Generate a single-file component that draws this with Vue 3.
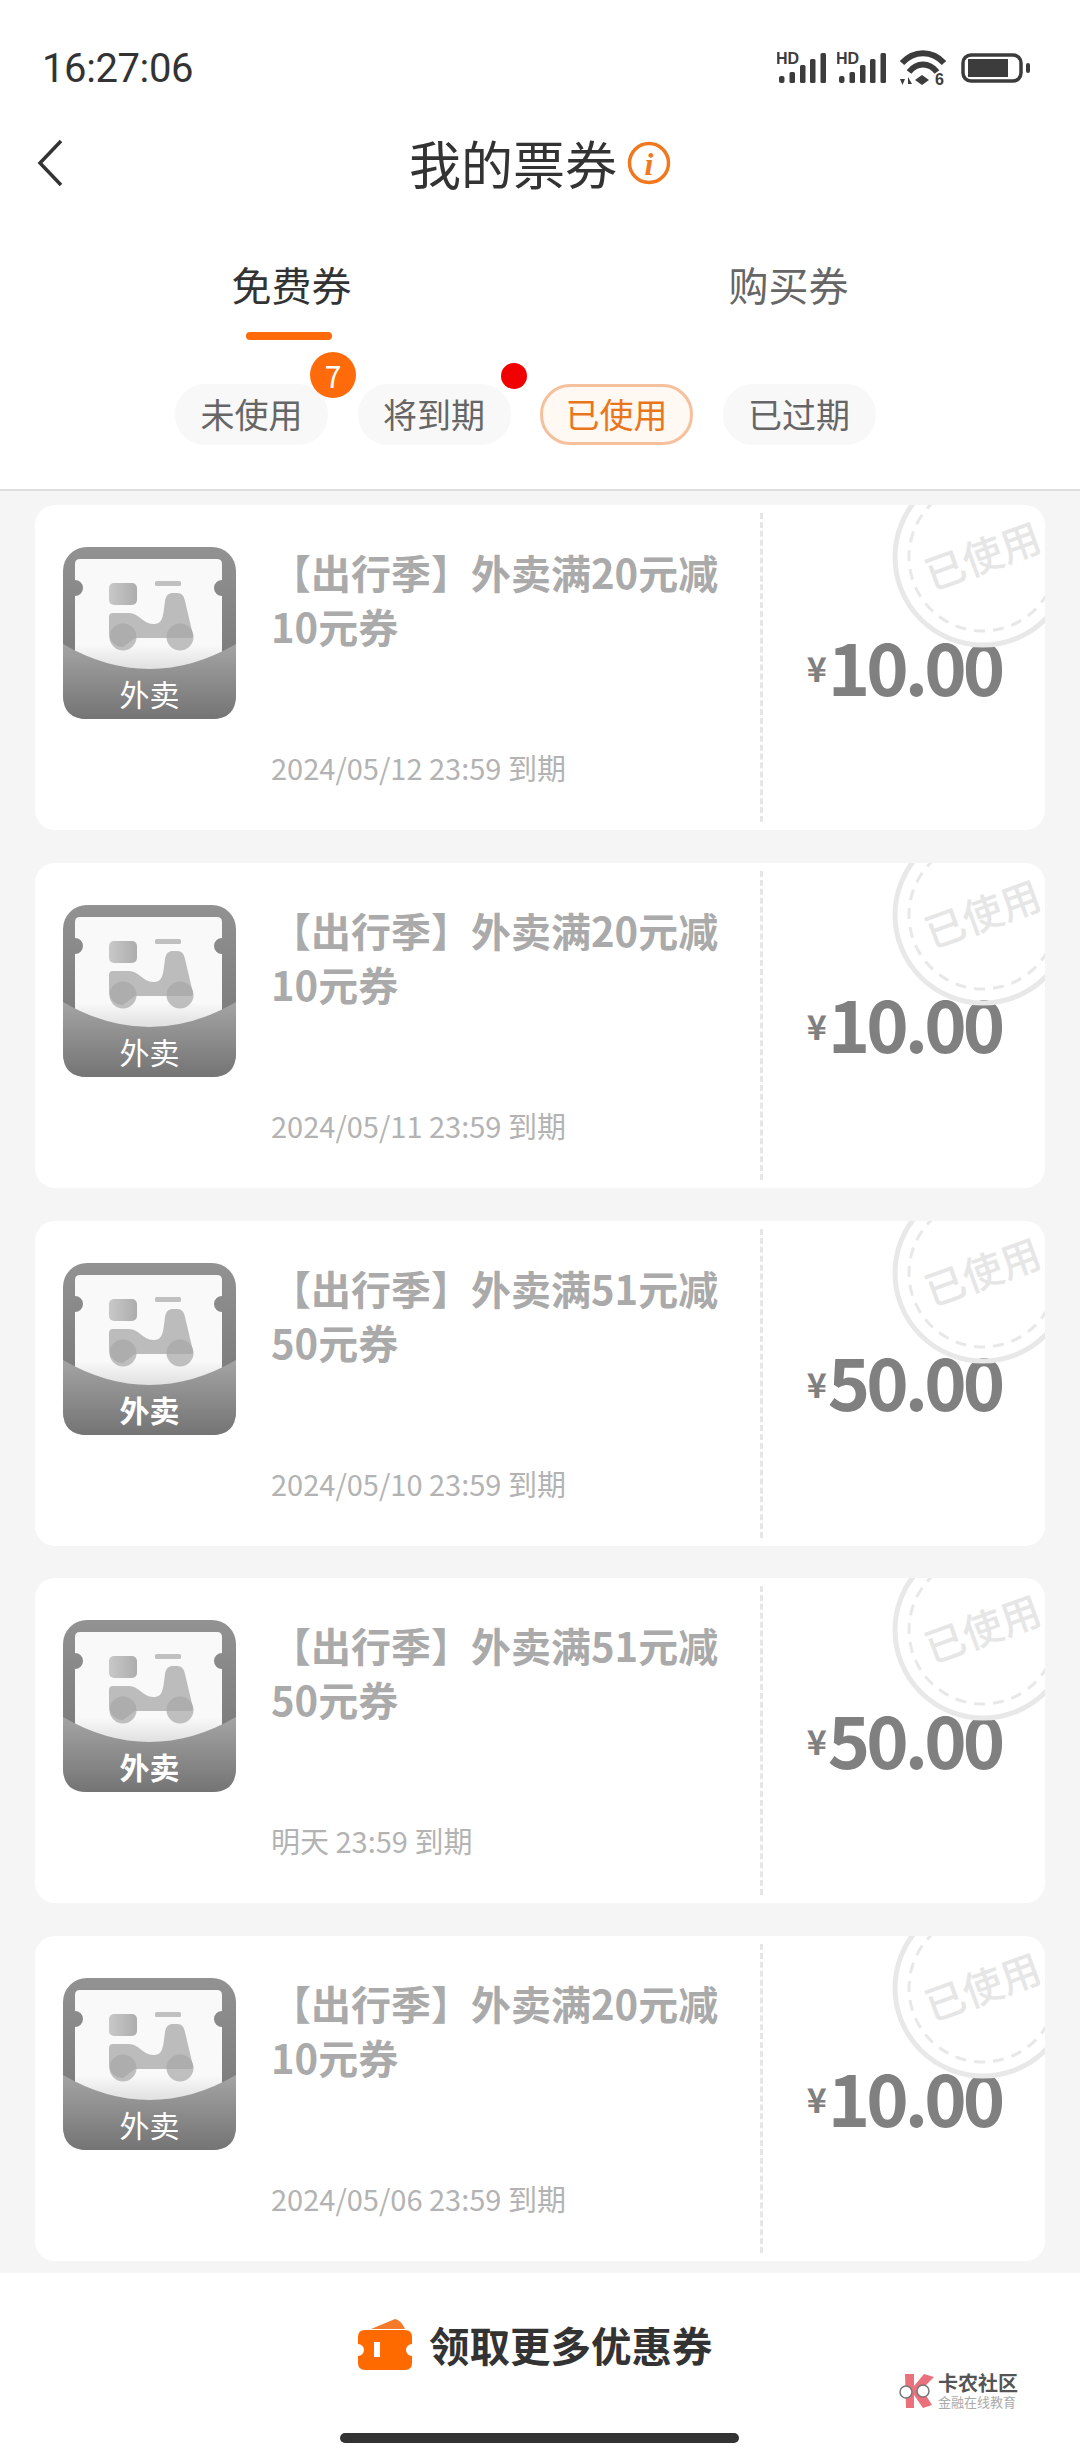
<script setup>
import { ref } from 'vue';

// 筛选项
const chips = [
  { label: '未使用', badge: '7' },
  { label: '将到期', dot: true },
  { label: '已使用', active: true },
  { label: '已过期' },
];

// 已使用的券
const coupons = ref([
  { id: 1, title: '【出行季】外卖满20元减10元券', date: '2024/05/12 23:59 到期', price: '10.00', strong: false },
  { id: 2, title: '【出行季】外卖满20元减10元券', date: '2024/05/11 23:59 到期', price: '10.00', strong: false },
  { id: 3, title: '【出行季】外卖满51元减50元券', date: '2024/05/10 23:59 到期', price: '50.00', strong: true },
  { id: 4, title: '【出行季】外卖满51元减50元券', date: '明天 23:59 到期', price: '50.00', strong: true },
  { id: 5, title: '【出行季】外卖满20元减10元券', date: '2024/05/06 23:59 到期', price: '10.00', strong: false },
]);
</script>

<template>
  <div class="page">
    <header class="head">
      <div class="status">
        <span class="time">16:27:06</span>
        <div class="status-icons">
          <svg v-for="n in 2" :key="n" width="50" height="32" viewBox="0 0 50 32">
            <text x="-1" y="12" class="hd">HD</text>
            <rect x="2" y="24" width="5.500" height="7" rx="2" fill="#3c3c3c" />
            <rect x="12.500" y="20" width="5.500" height="11" rx="1.500" fill="#3c3c3c" />
            <rect x="23" y="13" width="5.500" height="18" rx="1.500" fill="#3c3c3c" />
            <rect x="33" y="7" width="5.500" height="24" rx="1.500" fill="#3c3c3c" />
            <rect x="43.500" y="1" width="5.500" height="30" rx="1.500" fill="#3c3c3c" />
          </svg>
          <svg class="wifi" width="48" height="36" viewBox="0 0 48 36">
            <path d="M3 13 C15 0 33 0 45 13" fill="none" stroke="#3c3c3c" stroke-width="6" />
            <path d="M10 22 C18 12 30 12 38 22" fill="none" stroke="#3c3c3c" stroke-width="6" />
            <path d="M23 25 L30 30 L23 35 L16 30 Z" fill="#3c3c3c" />
            <path d="M1 29 L6 29 L3.500 35 Z M9 27 L13 34 L9 34 Z" fill="#3c3c3c" />
            <text x="36" y="35" class="six">6</text>
          </svg>
          <svg width="69" height="30" viewBox="0 0 69 30">
            <rect x="2" y="2" width="58" height="26" rx="8" fill="none" stroke="#3c3c3c" stroke-width="3.500" />
            <rect x="7" y="6" width="40" height="18" fill="#3c3c3c" />
            <rect x="65" y="10" width="4" height="10" rx="2" fill="#3c3c3c" />
          </svg>
        </div>
      </div>

      <div class="nav">
        <svg class="back" width="26" height="48" viewBox="0 0 26 48">
          <path d="M24 2 L3 24 L24 46" fill="none" stroke="#333" stroke-width="3.500" />
        </svg>
        <h1 class="title">我的票券</h1>
        <svg class="info" width="44" height="44" viewBox="0 0 44 44">
          <circle cx="22" cy="22" r="19.500" fill="none" stroke="#f0781e" stroke-width="3.500" />
          <text x="22" y="34" text-anchor="middle" class="info-i">i</text>
        </svg>
      </div>

      <div class="tabs">
        <div class="tab is-active">免费券<i class="tab-line"></i></div>
        <div class="tab">购买券</div>
      </div>

      <div class="chips">
        <div v-for="chip in chips" :key="chip.label" class="chip" :class="{ 'is-active': chip.active }">
          {{ chip.label }}
          <span v-if="chip.badge" class="badge">{{ chip.badge }}</span>
          <span v-if="chip.dot" class="dot"></span>
        </div>
      </div>
    </header>

    <main class="list">
      <article v-for="c in coupons" :key="c.id" class="card">
        <div class="thumb">
          <svg width="173" height="172" viewBox="0 0 173 172">
            <defs>
              <linearGradient id="shell" x1="0" y1="0" x2="0" y2="1">
                <stop offset="0" stop-color="#929292" />
                <stop offset="0.6" stop-color="#7e7e7e" />
              </linearGradient>
              <linearGradient id="pocket" x1="0" y1="0" x2="0" y2="1">
                <stop offset="0" stop-color="#a4a4a4" />
                <stop offset="1" stop-color="#747474" />
              </linearGradient>
              <linearGradient id="box" x1="0" y1="0" x2="1" y2="0">
                <stop offset="0" stop-color="#c8c8c8" />
                <stop offset="1" stop-color="#adadad" />
              </linearGradient>
              <linearGradient id="sheet" x1="0" y1="0" x2="0" y2="1">
                <stop offset="0.75" stop-color="#f9f9f9" />
                <stop offset="1" stop-color="#dcdcdc" />
              </linearGradient>
            </defs>
            <rect width="173" height="172" rx="24" fill="url(#shell)" />
            <path d="M17 12 H154 Q159 12 159 17 V33 A8 8 0 0 0 159 49 V126 H12 V49 A8 8 0 0 0 12 33 V17 Q12 12 17 12 Z" fill="url(#sheet)" />
            <rect x="46" y="36" width="28" height="22" rx="5" fill="url(#box)" />
            <rect x="92" y="34" width="26" height="5" rx="1.500" fill="#c0c0c0" />
            <path d="M50 66 H66 C76 66 80 77 90 77 C100 77 100 70 102 54 C103 48 106 46 110 46 H114 C119 46 121 49 122 54 L130 88 Q131 91 127 91 H72 L60 100 C52 100 46 94 46 86 V70 Q46 66 50 66 Z" fill="#bcbcbc" />
            <circle cx="60" cy="90" r="13.500" fill="#a6a6a6" opacity="0.7" />
            <circle cx="117" cy="90" r="13.500" fill="#a6a6a6" opacity="0.7" />
            <path d="M0 97 Q43 122 86.500 122 Q130 122 173 97 V148 Q173 172 149 172 H24 Q0 172 0 148 Z" fill="url(#pocket)" />
          </svg>
          <span class="thumb-label" :class="{ 'is-strong': c.strong }">外卖</span>
        </div>

        <div class="info-col">
          <div class="name">{{ c.title }}</div>
          <div class="date">{{ c.date }}</div>
        </div>

        <div class="price-col">
          <span class="yen">¥</span><span class="price">{{ c.price }}</span>
        </div>

        <svg class="stamp" width="190" height="190" viewBox="0 0 190 190">
          <circle cx="95" cy="95" r="88" fill="none" stroke="#e8e8e8" stroke-width="5" />
          <circle cx="95" cy="95" r="74" fill="none" stroke="#e8e8e8" stroke-width="3" stroke-dasharray="11 8" />
          <text x="95" y="109" text-anchor="middle" transform="rotate(-20 95 95)" class="stamp-text">已使用</text>
        </svg>
      </article>
    </main>

    <footer class="foot">
      <button class="more">
        <svg width="56" height="52" viewBox="0 0 56 52">
          <path d="M14 10 L38 0 Q44 1 48 10 Z" fill="#f47a2a" />
          <path d="M8 11 H48 Q55 11 55 18 V25 A6 6 0 0 0 55 37 V44 Q55 51 48 51 H8 Q1 51 1 44 V37 A6 6 0 0 0 1 25 V18 Q1 11 8 11 Z" fill="#ff6a00" />
          <rect x="17" y="23" width="6" height="15" fill="#fff" />
        </svg>
        <span>领取更多优惠券</span>
      </button>

      <div class="mark">
        <svg width="36" height="36" viewBox="0 0 36 36">
          <path d="M6 1 H15 V13 L25 1 L35 4 L23 16 L33 32 L24 35 L15 22 V35 H7 Z" fill="#ea717c" />
          <circle cx="7" cy="19" r="6" fill="#fff" stroke="#777" stroke-width="1.500" />
          <circle cx="24" cy="18" r="6" fill="#fff" stroke="#777" stroke-width="1.500" />
        </svg>
        <div class="mark-text">
          <b>卡农社区</b>
          <small>金融在线教育</small>
        </div>
      </div>

      <div class="home-bar"></div>
    </footer>
  </div>
</template>

<style>
html, body {
  margin: 0;
  background: #fff;
}
</style>

<style scoped>
.page {
  width: 1080px;
  height: 2460px;
  display: flex;
  flex-direction: column;
  overflow: hidden;
  background: #f5f5f5;
  font-family: 'Noto Sans CJK SC', 'Noto Sans', sans-serif;
  color: #333;
}

.head {
  height: 489px;
  flex: none;
  background: #fff;
  border-bottom: 2px solid #dedede;
}

.status {
  height: 96px;
  padding: 20px 50px 0 42px;
  display: flex;
  align-items: center;
  justify-content: space-between;
}

.time {
  font-family: 'Roboto', sans-serif;
  font-size: 40px;
  letter-spacing: -0.4px;
  color: #333;
}

.status-icons {
  display: flex;
  align-items: center;
  gap: 10px;
}

.wifi {
  margin: 0 4px 0 2px;
}

.hd {
  font: 700 16px 'Liberation Sans', sans-serif;
  fill: #3c3c3c;
}

.six {
  font: 700 16px 'Liberation Sans', sans-serif;
  fill: #3c3c3c;
}

.nav {
  height: 94px;
  position: relative;
  display: flex;
  align-items: center;
  justify-content: center;
  gap: 10px;
}

.back {
  position: absolute;
  left: 37px;
  top: 23px;
}

.title {
  margin: 0;
  font-size: 52px;
  font-weight: 400;
  line-height: 60px;
  color: #333;
}

.info-i {
  font: italic 700 32px 'Liberation Serif', serif;
  fill: #f0781e;
}

.tabs {
  height: 130px;
  display: flex;
  justify-content: center;
  padding-top: 49px;
  box-sizing: border-box;
}

.tab {
  width: 497px;
  height: 50px;
  position: relative;
  text-align: center;
  font-size: 40px;
  line-height: 50px;
  color: #666;
}

.tab.is-active {
  color: #333;
}

.tab-line {
  position: absolute;
  left: 203px;
  top: 73px;
  width: 86px;
  height: 8px;
  border-radius: 4px;
  background: #ff6a0a;
}

.chips {
  display: flex;
  gap: 29.5px;
  padding: 44px 0 0 175px;
}

.chip {
  width: 153px;
  height: 61px;
  box-sizing: border-box;
  position: relative;
  border-radius: 30px;
  background: #f8f8f8;
  text-align: center;
  font-size: 34px;
  line-height: 60px;
  color: #666;
}

.chip.is-active {
  background: #fff8f3;
  border: 3px solid #f5c09c;
  line-height: 54px;
  color: #e8761c;
}

.badge {
  position: absolute;
  top: -32px;
  right: -28px;
  width: 46px;
  height: 46px;
  border-radius: 50%;
  background: #ff6a0a;
  color: #fff;
  font-size: 30px;
  line-height: 46px;
}

.dot {
  position: absolute;
  top: -21px;
  right: -16px;
  width: 26px;
  height: 26px;
  border-radius: 50%;
  background: #f00000;
}

.list {
  flex: 1;
  min-height: 0;
  padding: 14px 35px 0;
  overflow: hidden;
}

.card {
  height: 325px;
  margin-bottom: 32.75px;
  position: relative;
  display: flex;
  overflow: hidden;
  border-radius: 20px;
  background: #fff;
}

.thumb {
  flex: none;
  position: relative;
  width: 173px;
  height: 172px;
  margin: 42px 35px 0 28px;
}

.thumb svg {
  display: block;
}

.thumb-label {
  position: absolute;
  left: 0;
  right: 0;
  top: 125px;
  text-align: center;
  font-size: 30px;
  line-height: 42px;
  color: #fff;
}

.thumb-label.is-strong {
  font-weight: 700;
}

.info-col {
  width: 489px;
  flex: none;
  padding-top: 40px;
}

.name {
  height: 108px;
  font-size: 40px;
  font-weight: 700;
  line-height: 54px;
  color: #aaa;
}

.date {
  margin-top: 94px;
  font-size: 29px;
  line-height: 40px;
  color: #b3b3b3;
}

.price-col {
  flex: 1;
  height: 309px;
  margin-top: 8px;
  display: flex;
  align-items: center;
  justify-content: center;
  border-left: 3px dashed #e6e6e6;
  color: #808080;
  font-weight: 700;
}

.yen {
  font-size: 34px;
  margin-right: 1px;
}

.price {
  font-size: 72px;
  letter-spacing: -4px;
  line-height: 90px;
  margin-top: -6px;
}

.stamp {
  position: absolute;
  left: 853px;
  top: -43px;
}

.stamp-text {
  font-size: 40px;
  font-weight: 500;
  fill: #e6e6e6;
}

.foot {
  height: 187px;
  flex: none;
  position: relative;
  background: #fff;
}

.more {
  display: flex;
  align-items: center;
  gap: 16px;
  border: 0;
  background: none;
  padding: 46px 0 0 357px;
  font-family: inherit;
  font-size: 40.5px;
  font-weight: 700;
  line-height: 52px;
  color: #333;
}

.mark {
  position: absolute;
  left: 899px;
  top: 99px;
  display: flex;
  align-items: center;
  gap: 3px;
}

.mark-text {
  display: flex;
  flex-direction: column;
}

.mark-text b {
  font-size: 20px;
  line-height: 22px;
  color: #555;
}

.mark-text small {
  font-size: 13px;
  line-height: 16px;
  color: #aaa;
}

.home-bar {
  position: absolute;
  left: 340px;
  top: 160px;
  width: 399px;
  height: 10px;
  border-radius: 5px;
  background: #333;
}
</style>
